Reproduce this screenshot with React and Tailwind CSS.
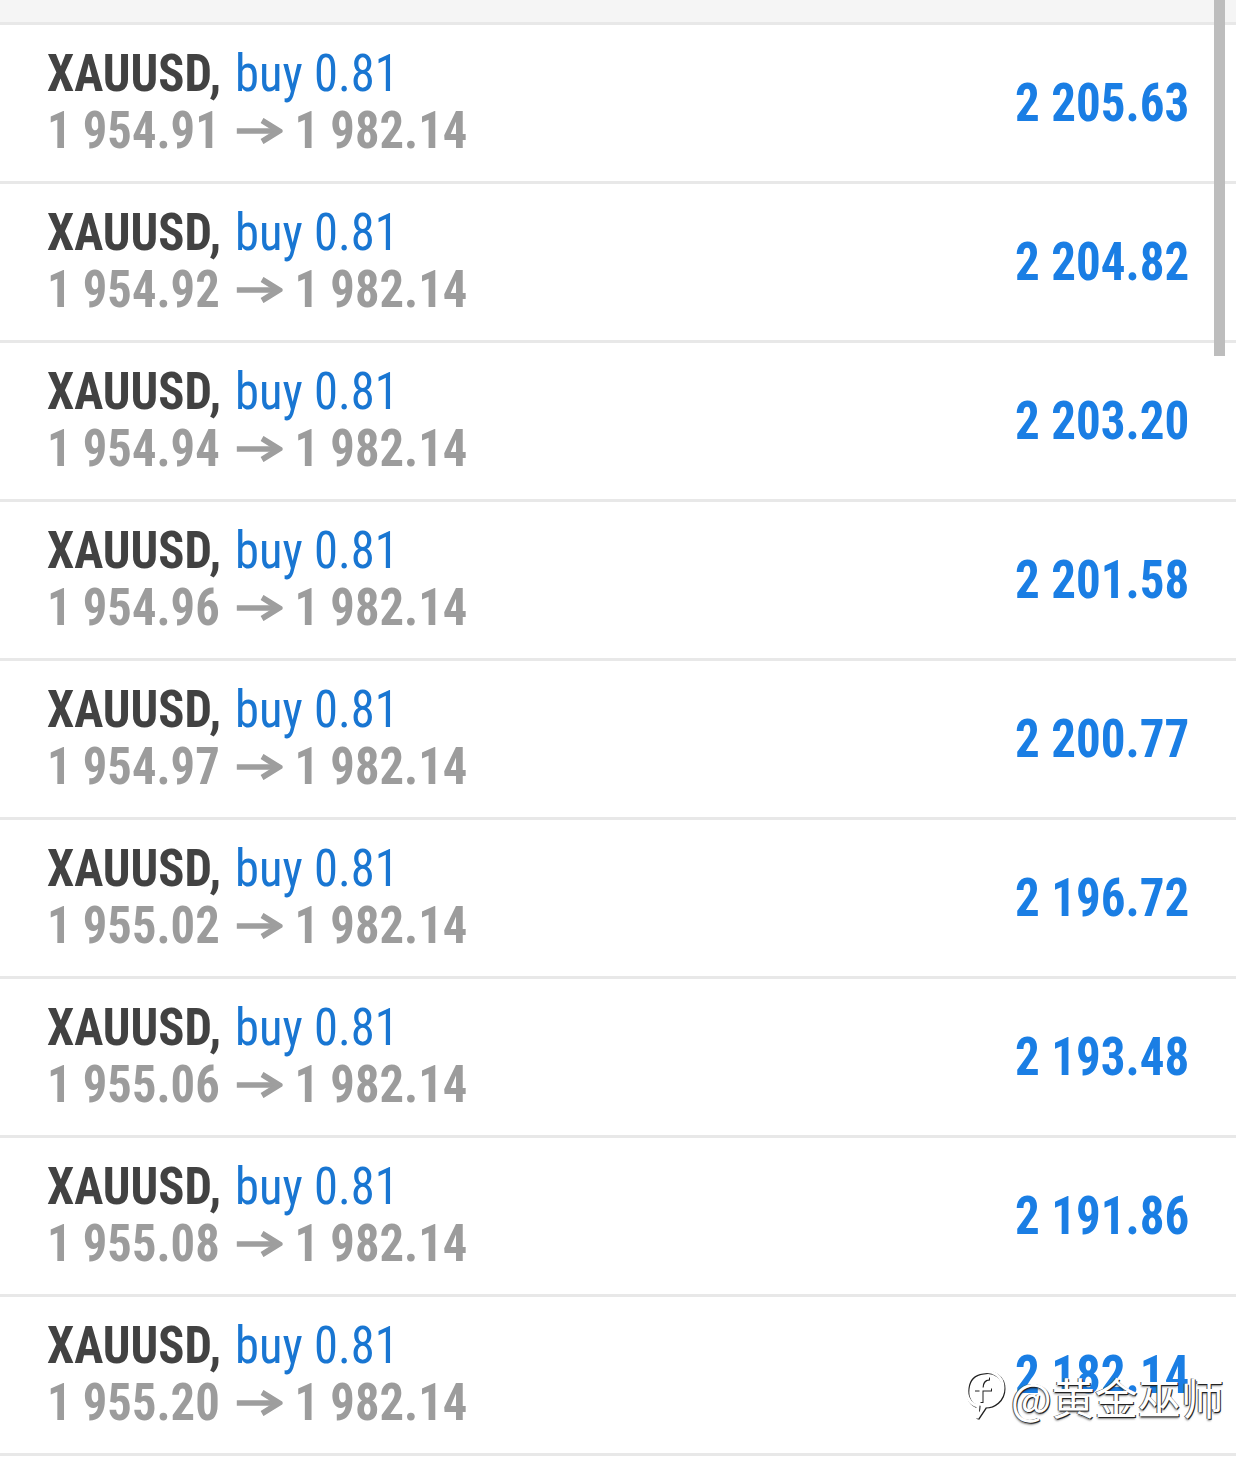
import React from 'react';

const rows = [
  { open: '1 954.91', profit: '2 205.63' },
  { open: '1 954.92', profit: '2 204.82' },
  { open: '1 954.94', profit: '2 203.20' },
  { open: '1 954.96', profit: '2 201.58' },
  { open: '1 954.97', profit: '2 200.77' },
  { open: '1 955.02', profit: '2 196.72' },
  { open: '1 955.06', profit: '2 193.48' },
  { open: '1 955.08', profit: '2 191.86' },
  { open: '1 955.20', profit: '2 182.14' },
];

const Arrow = () => (
  <svg width="50" height="26" viewBox="0 0 50 26" className="ml-[17px] mr-[13px] shrink-0">
    <path d="M1 13 L45 13" stroke="#9e9e9e" strokeWidth="5.5" />
    <path d="M28 2.5 L46 13 L28 23.5" fill="none" stroke="#9e9e9e" strokeWidth="6" />
  </svg>
);

const TradeRow = ({ open, profit }) => (
  <div className="border-t-[3px] border-[#e8e8e8] h-[159px] flex items-center justify-between pl-[47px] pr-[47px]">
    <div className="pb-[2px] origin-left scale-x-[0.935]">
      <div className="text-[52px] leading-[57px] whitespace-nowrap">
        <span className="font-bold text-[#424242]">XAUUSD,</span>{' '}
        <span className="ml-[3px] font-normal text-[#1976d2]">buy 0.81</span>
      </div>
      <div className="flex items-center text-[52px] leading-[57px] font-bold text-[#9c9c9c] whitespace-nowrap">
        <span>{open}</span>
        <Arrow />
        <span>1 982.14</span>
      </div>
    </div>
    <div className="origin-right scale-x-[0.925] text-[53px] leading-[57px] font-bold text-[#1a7ee4] whitespace-nowrap">
      {profit}
    </div>
  </div>
);

export default function App() {
  return (
    <div
      className="relative w-[1236px] h-[1461px] bg-white overflow-hidden [font-stretch:75%]"
      style={{ fontFamily: 'Roboto, "Noto Sans", sans-serif' }}
    >
      <div className="h-[22px] bg-[#f5f5f5]" />
      {rows.map((r) => (
        <TradeRow key={r.open} {...r} />
      ))}
      <div className="border-t-[3px] border-[#e8e8e8]" />

      {/* scrollbar */}
      <div className="absolute left-[1214px] top-0 w-[11px] h-[356px] bg-[#bdbdbd]" />

      {/* watermark */}
      <div className="absolute left-[963px] top-[1368px] flex items-center gap-[4px] [font-stretch:100%]">
        <svg width="44" height="56" viewBox="0 0 44 56" style={{ filter: 'drop-shadow(1px 1px 0 #222)' }}>
          <path
            d="M20 4 C30 2 40 8 40 20 C40 32 30 38 22 38 L14 50 L15 38 C6 36 3 28 4 20 C5 10 12 5 20 4 Z"
            fill="none"
            stroke="#fff"
            strokeWidth="3"
          />
          <path d="M26 10 C20 10 18 14 18 20 L18 34 M11 21 L28 21" fill="none" stroke="#fff" strokeWidth="3" />
        </svg>
        <span
          className="text-[43px] leading-none text-white"
          style={{
            fontFamily: '"Noto Sans CJK SC", "Noto Sans", sans-serif',
            textShadow: '1px 1px 0 #222, -1px 0 0 #555, 0 2px 2px rgba(0,0,0,0.5)',
          }}
        >
          @黄金巫师
        </span>
      </div>
    </div>
  );
}
